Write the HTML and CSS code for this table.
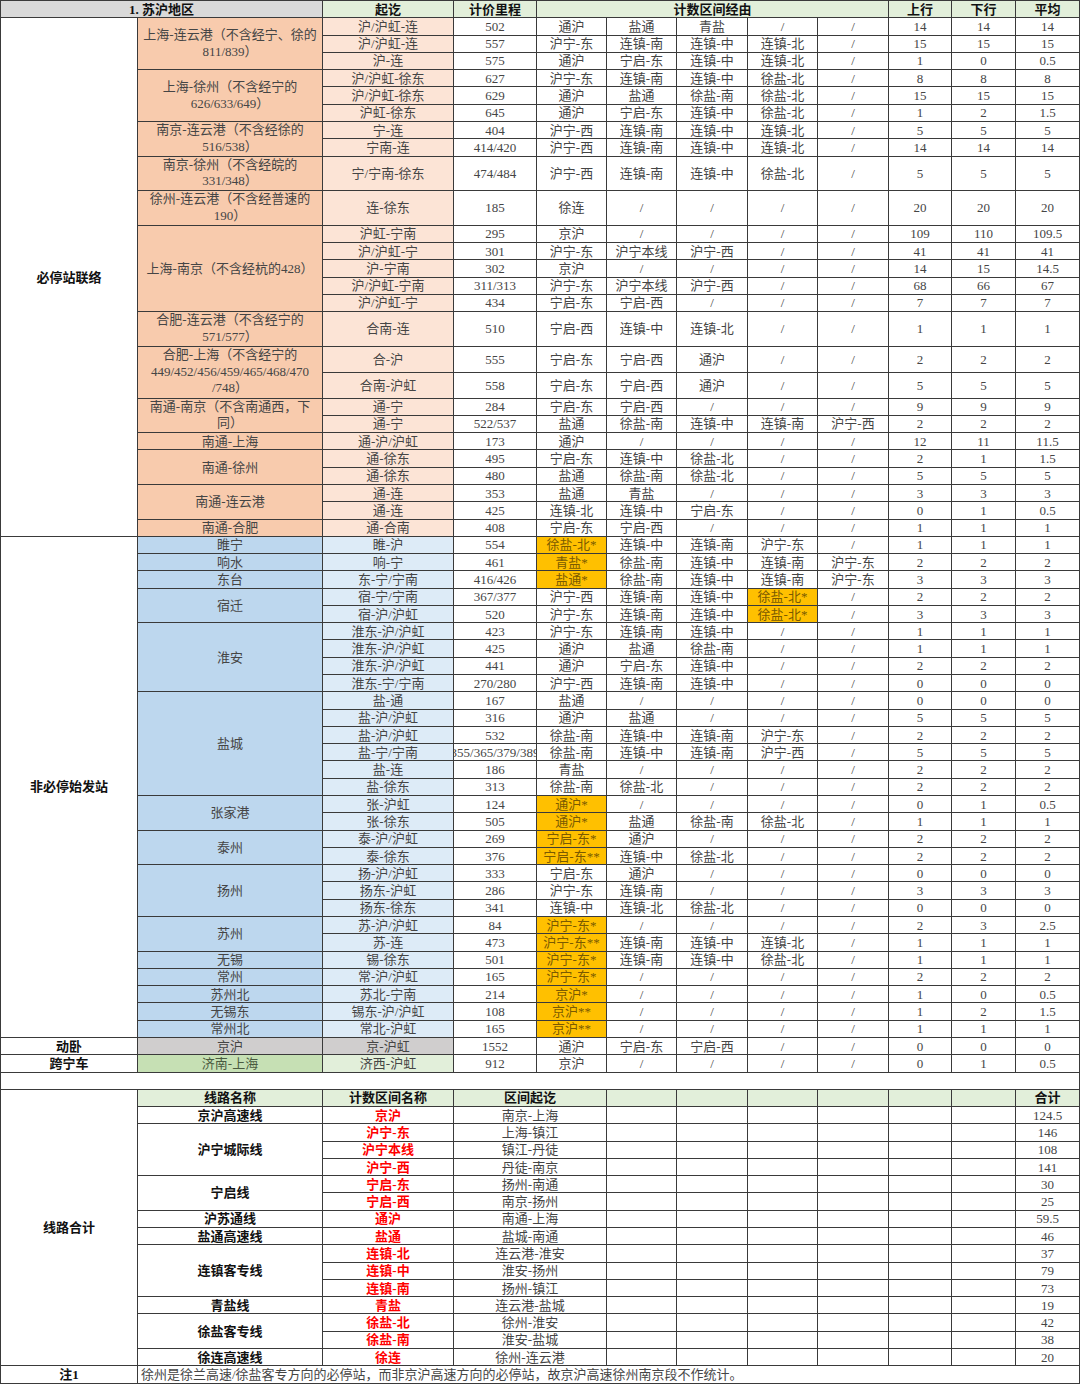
FILE: index.html
```html
<!DOCTYPE html>
<html lang="zh-CN">
<head>
<meta charset="utf-8">
<title>苏沪地区 计数区间统计</title>
<link rel="stylesheet" href="styles.css">
</head>
<body>
<div class="sheet">
<div class="hgray b cs2">1. 苏沪地区</div><div class="hg b">起讫</div><div class="hg b">计价里程</div><div class="hg b cs5">计数区间经由</div><div class="hg b">上行</div><div class="hg b">下行</div><div class="hg b">平均</div>

<div class="b lab rs26">必停站联络</div><div class="sal wrap rs3">上海-连云港（不含经宁、徐的<br>811/839）</div><div class="lsal">沪/沪虹-连</div><div>502</div><div>通沪</div><div>盐通</div><div>青盐</div><div>/</div><div>/</div><div>14</div><div>14</div><div>14</div>
<div class="lsal">沪/沪虹-连</div><div>557</div><div>沪宁-东</div><div>连镇-南</div><div>连镇-中</div><div>连镇-北</div><div>/</div><div>15</div><div>15</div><div>15</div>
<div class="lsal">沪-连</div><div>575</div><div>通沪</div><div>宁启-东</div><div>连镇-中</div><div>连镇-北</div><div>/</div><div>1</div><div>0</div><div>0.5</div>
<div class="sal wrap rs3">上海-徐州（不含经宁的<br>626/633/649）</div><div class="lsal">沪/沪虹-徐东</div><div>627</div><div>沪宁-东</div><div>连镇-南</div><div>连镇-中</div><div>徐盐-北</div><div>/</div><div>8</div><div>8</div><div>8</div>
<div class="lsal">沪/沪虹-徐东</div><div>629</div><div>通沪</div><div>盐通</div><div>徐盐-南</div><div>徐盐-北</div><div>/</div><div>15</div><div>15</div><div>15</div>
<div class="lsal">沪虹-徐东</div><div>645</div><div>通沪</div><div>宁启-东</div><div>连镇-中</div><div>徐盐-北</div><div>/</div><div>1</div><div>2</div><div>1.5</div>
<div class="sal wrap rs2">南京-连云港（不含经徐的<br>516/538）</div><div class="lsal">宁-连</div><div>404</div><div>沪宁-西</div><div>连镇-南</div><div>连镇-中</div><div>连镇-北</div><div>/</div><div>5</div><div>5</div><div>5</div>
<div class="lsal">宁南-连</div><div>414/420</div><div>沪宁-西</div><div>连镇-南</div><div>连镇-中</div><div>连镇-北</div><div>/</div><div>14</div><div>14</div><div>14</div>
<div class="sal wrap">南京-徐州（不含经皖的<br>331/348）</div><div class="lsal">宁/宁南-徐东</div><div>474/484</div><div>沪宁-西</div><div>连镇-南</div><div>连镇-中</div><div>徐盐-北</div><div>/</div><div>5</div><div>5</div><div>5</div>
<div class="sal wrap">徐州-连云港（不含经普速的<br>190）</div><div class="lsal">连-徐东</div><div>185</div><div>徐连</div><div>/</div><div>/</div><div>/</div><div>/</div><div>20</div><div>20</div><div>20</div>
<div class="sal rs5">上海-南京（不含经杭的428）</div><div class="lsal">沪虹-宁南</div><div>295</div><div>京沪</div><div>/</div><div>/</div><div>/</div><div>/</div><div>109</div><div>110</div><div>109.5</div>
<div class="lsal">沪/沪虹-宁</div><div>301</div><div>沪宁-东</div><div>沪宁本线</div><div>沪宁-西</div><div>/</div><div>/</div><div>41</div><div>41</div><div>41</div>
<div class="lsal">沪-宁南</div><div>302</div><div>京沪</div><div>/</div><div>/</div><div>/</div><div>/</div><div>14</div><div>15</div><div>14.5</div>
<div class="lsal">沪/沪虹-宁南</div><div>311/313</div><div>沪宁-东</div><div>沪宁本线</div><div>沪宁-西</div><div>/</div><div>/</div><div>68</div><div>66</div><div>67</div>
<div class="lsal">沪/沪虹-宁</div><div>434</div><div>宁启-东</div><div>宁启-西</div><div>/</div><div>/</div><div>/</div><div>7</div><div>7</div><div>7</div>
<div class="sal wrap">合肥-连云港（不含经宁的<br>571/577）</div><div class="lsal">合南-连</div><div>510</div><div>宁启-西</div><div>连镇-中</div><div>连镇-北</div><div>/</div><div>/</div><div>1</div><div>1</div><div>1</div>
<div class="sal wrap rs2">合肥-上海（不含经宁的<br>449/452/456/459/465/468/470<br>/748）</div><div class="lsal">合-沪</div><div>555</div><div>宁启-东</div><div>宁启-西</div><div>通沪</div><div>/</div><div>/</div><div>2</div><div>2</div><div>2</div>
<div class="lsal">合南-沪虹</div><div>558</div><div>宁启-东</div><div>宁启-西</div><div>通沪</div><div>/</div><div>/</div><div>5</div><div>5</div><div>5</div>
<div class="sal wrap rs2">南通-南京（不含南通西，下<br>同）</div><div class="lsal">通-宁</div><div>284</div><div>宁启-东</div><div>宁启-西</div><div>/</div><div>/</div><div>/</div><div>9</div><div>9</div><div>9</div>
<div class="lsal">通-宁</div><div>522/537</div><div>盐通</div><div>徐盐-南</div><div>连镇-中</div><div>连镇-南</div><div>沪宁-西</div><div>2</div><div>2</div><div>2</div>
<div class="sal">南通-上海</div><div class="lsal">通-沪/沪虹</div><div>173</div><div>通沪</div><div>/</div><div>/</div><div>/</div><div>/</div><div>12</div><div>11</div><div>11.5</div>
<div class="sal rs2">南通-徐州</div><div class="lsal">通-徐东</div><div>495</div><div>宁启-东</div><div>连镇-中</div><div>徐盐-北</div><div>/</div><div>/</div><div>2</div><div>1</div><div>1.5</div>
<div class="lsal">通-徐东</div><div>480</div><div>盐通</div><div>徐盐-南</div><div>徐盐-北</div><div>/</div><div>/</div><div>5</div><div>5</div><div>5</div>
<div class="sal rs2">南通-连云港</div><div class="lsal">通-连</div><div>353</div><div>盐通</div><div>青盐</div><div>/</div><div>/</div><div>/</div><div>3</div><div>3</div><div>3</div>
<div class="lsal">通-连</div><div>425</div><div>连镇-北</div><div>连镇-中</div><div>宁启-东</div><div>/</div><div>/</div><div>0</div><div>1</div><div>0.5</div>
<div class="sal">南通-合肥</div><div class="lsal">通-合南</div><div>408</div><div>宁启-东</div><div>宁启-西</div><div>/</div><div>/</div><div>/</div><div>1</div><div>1</div><div>1</div>

<div class="b lab rs29">非必停始发站</div><div class="blu">睢宁</div><div class="lblu">睢-沪</div><div>554</div><div class="hl">徐盐-北*</div><div>连镇-中</div><div>连镇-南</div><div>沪宁-东</div><div>/</div><div>1</div><div>1</div><div>1</div>
<div class="blu">响水</div><div class="lblu">响-宁</div><div>461</div><div class="hl">青盐*</div><div>徐盐-南</div><div>连镇-中</div><div>连镇-南</div><div>沪宁-东</div><div>2</div><div>2</div><div>2</div>
<div class="blu">东台</div><div class="lblu">东-宁/宁南</div><div>416/426</div><div class="hl">盐通*</div><div>徐盐-南</div><div>连镇-中</div><div>连镇-南</div><div>沪宁-东</div><div>3</div><div>3</div><div>3</div>
<div class="blu rs2">宿迁</div><div class="lblu">宿-宁/宁南</div><div>367/377</div><div>沪宁-西</div><div>连镇-南</div><div>连镇-中</div><div class="hl">徐盐-北*</div><div>/</div><div>2</div><div>2</div><div>2</div>
<div class="lblu">宿-沪/沪虹</div><div>520</div><div>沪宁-东</div><div>连镇-南</div><div>连镇-中</div><div class="hl">徐盐-北*</div><div>/</div><div>3</div><div>3</div><div>3</div>
<div class="blu rs4">淮安</div><div class="lblu">淮东-沪/沪虹</div><div>423</div><div>沪宁-东</div><div>连镇-南</div><div>连镇-中</div><div>/</div><div>/</div><div>1</div><div>1</div><div>1</div>
<div class="lblu">淮东-沪/沪虹</div><div>425</div><div>通沪</div><div>盐通</div><div>徐盐-南</div><div>/</div><div>/</div><div>1</div><div>1</div><div>1</div>
<div class="lblu">淮东-沪/沪虹</div><div>441</div><div>通沪</div><div>宁启-东</div><div>连镇-中</div><div>/</div><div>/</div><div>2</div><div>2</div><div>2</div>
<div class="lblu">淮东-宁/宁南</div><div>270/280</div><div>沪宁-西</div><div>连镇-南</div><div>连镇-中</div><div>/</div><div>/</div><div>0</div><div>0</div><div>0</div>
<div class="blu rs6">盐城</div><div class="lblu">盐-通</div><div>167</div><div>盐通</div><div>/</div><div>/</div><div>/</div><div>/</div><div>0</div><div>0</div><div>0</div>
<div class="lblu">盐-沪/沪虹</div><div>316</div><div>通沪</div><div>盐通</div><div>/</div><div>/</div><div>/</div><div>5</div><div>5</div><div>5</div>
<div class="lblu">盐-沪/沪虹</div><div>532</div><div>徐盐-南</div><div>连镇-中</div><div>连镇-南</div><div>沪宁-东</div><div>/</div><div>2</div><div>2</div><div>2</div>
<div class="lblu">盐-宁/宁南</div><div>355/365/379/389</div><div>徐盐-南</div><div>连镇-中</div><div>连镇-南</div><div>沪宁-西</div><div>/</div><div>5</div><div>5</div><div>5</div>
<div class="lblu">盐-连</div><div>186</div><div>青盐</div><div>/</div><div>/</div><div>/</div><div>/</div><div>2</div><div>2</div><div>2</div>
<div class="lblu">盐-徐东</div><div>313</div><div>徐盐-南</div><div>徐盐-北</div><div>/</div><div>/</div><div>/</div><div>2</div><div>2</div><div>2</div>
<div class="blu rs2">张家港</div><div class="lblu">张-沪虹</div><div>124</div><div class="hl">通沪*</div><div>/</div><div>/</div><div>/</div><div>/</div><div>0</div><div>1</div><div>0.5</div>
<div class="lblu">张-徐东</div><div>505</div><div class="hl">通沪*</div><div>盐通</div><div>徐盐-南</div><div>徐盐-北</div><div>/</div><div>1</div><div>1</div><div>1</div>
<div class="blu rs2">泰州</div><div class="lblu">泰-沪/沪虹</div><div>269</div><div class="hl">宁启-东*</div><div>通沪</div><div>/</div><div>/</div><div>/</div><div>2</div><div>2</div><div>2</div>
<div class="lblu">泰-徐东</div><div>376</div><div class="hl">宁启-东**</div><div>连镇-中</div><div>徐盐-北</div><div>/</div><div>/</div><div>2</div><div>2</div><div>2</div>
<div class="blu rs3">扬州</div><div class="lblu">扬-沪/沪虹</div><div>333</div><div>宁启-东</div><div>通沪</div><div>/</div><div>/</div><div>/</div><div>0</div><div>0</div><div>0</div>
<div class="lblu">扬东-沪虹</div><div>286</div><div>沪宁-东</div><div>连镇-南</div><div>/</div><div>/</div><div>/</div><div>3</div><div>3</div><div>3</div>
<div class="lblu">扬东-徐东</div><div>341</div><div>连镇-中</div><div>连镇-北</div><div>徐盐-北</div><div>/</div><div>/</div><div>0</div><div>0</div><div>0</div>
<div class="blu rs2">苏州</div><div class="lblu">苏-沪/沪虹</div><div>84</div><div class="hl">沪宁-东*</div><div>/</div><div>/</div><div>/</div><div>/</div><div>2</div><div>3</div><div>2.5</div>
<div class="lblu">苏-连</div><div>473</div><div class="hl">沪宁-东**</div><div>连镇-南</div><div>连镇-中</div><div>连镇-北</div><div>/</div><div>1</div><div>1</div><div>1</div>
<div class="blu">无锡</div><div class="lblu">锡-徐东</div><div>501</div><div class="hl">沪宁-东*</div><div>连镇-南</div><div>连镇-中</div><div>徐盐-北</div><div>/</div><div>1</div><div>1</div><div>1</div>
<div class="blu">常州</div><div class="lblu">常-沪/沪虹</div><div>165</div><div class="hl">沪宁-东*</div><div>/</div><div>/</div><div>/</div><div>/</div><div>2</div><div>2</div><div>2</div>
<div class="blu">苏州北</div><div class="lblu">苏北-宁南</div><div>214</div><div class="hl">京沪*</div><div>/</div><div>/</div><div>/</div><div>/</div><div>1</div><div>0</div><div>0.5</div>
<div class="blu">无锡东</div><div class="lblu">锡东-沪/沪虹</div><div>108</div><div class="hl">京沪**</div><div>/</div><div>/</div><div>/</div><div>/</div><div>1</div><div>2</div><div>1.5</div>
<div class="blu">常州北</div><div class="lblu">常北-沪虹</div><div>165</div><div class="hl">京沪**</div><div>/</div><div>/</div><div>/</div><div>/</div><div>1</div><div>1</div><div>1</div>

<div class="b lab">动卧</div><div class="gry">京沪</div><div class="gry">京-沪虹</div><div>1552</div><div>通沪</div><div>宁启-东</div><div>宁启-西</div><div>/</div><div>/</div><div>0</div><div>0</div><div>0</div>
<div class="b lab">跨宁车</div><div class="grn">济南-上海</div><div class="lgrn">济西-沪虹</div><div>912</div><div>京沪</div><div>/</div><div>/</div><div>/</div><div>/</div><div>0</div><div>1</div><div>0.5</div>

<div class="cs12"></div>

<div class="b lab rs16">线路合计</div><div class="hg b">线路名称</div><div class="hg b">计数区间名称</div><div class="hg b cs2">区间起讫</div><div class="hg"></div><div class="hg"></div><div class="hg"></div><div class="hg"></div><div class="hg"></div><div class="hg"></div><div class="hg b">合计</div>
<div class="b lab">京沪高速线</div><div class="red">京沪</div><div class="cs2">南京-上海</div><div></div><div></div><div></div><div></div><div></div><div></div><div>124.5</div>
<div class="b lab rs3">沪宁城际线</div><div class="red">沪宁-东</div><div class="cs2">上海-镇江</div><div></div><div></div><div></div><div></div><div></div><div></div><div>146</div>
<div class="red">沪宁本线</div><div class="cs2">镇江-丹徒</div><div></div><div></div><div></div><div></div><div></div><div></div><div>108</div>
<div class="red">沪宁-西</div><div class="cs2">丹徒-南京</div><div></div><div></div><div></div><div></div><div></div><div></div><div>141</div>
<div class="b lab rs2">宁启线</div><div class="red">宁启-东</div><div class="cs2">扬州-南通</div><div></div><div></div><div></div><div></div><div></div><div></div><div>30</div>
<div class="red">宁启-西</div><div class="cs2">南京-扬州</div><div></div><div></div><div></div><div></div><div></div><div></div><div>25</div>
<div class="b lab">沪苏通线</div><div class="red">通沪</div><div class="cs2">南通-上海</div><div></div><div></div><div></div><div></div><div></div><div></div><div>59.5</div>
<div class="b lab">盐通高速线</div><div class="red">盐通</div><div class="cs2">盐城-南通</div><div></div><div></div><div></div><div></div><div></div><div></div><div>46</div>
<div class="b lab rs3">连镇客专线</div><div class="red">连镇-北</div><div class="cs2">连云港-淮安</div><div></div><div></div><div></div><div></div><div></div><div></div><div>37</div>
<div class="red">连镇-中</div><div class="cs2">淮安-扬州</div><div></div><div></div><div></div><div></div><div></div><div></div><div>79</div>
<div class="red">连镇-南</div><div class="cs2">扬州-镇江</div><div></div><div></div><div></div><div></div><div></div><div></div><div>73</div>
<div class="b lab">青盐线</div><div class="red">青盐</div><div class="cs2">连云港-盐城</div><div></div><div></div><div></div><div></div><div></div><div></div><div>19</div>
<div class="b lab rs2">徐盐客专线</div><div class="red">徐盐-北</div><div class="cs2">徐州-淮安</div><div></div><div></div><div></div><div></div><div></div><div></div><div>42</div>
<div class="red">徐盐-南</div><div class="cs2">淮安-盐城</div><div></div><div></div><div></div><div></div><div></div><div></div><div>38</div>
<div class="b lab">徐连高速线</div><div class="red">徐连</div><div class="cs2">徐州-连云港</div><div></div><div></div><div></div><div></div><div></div><div></div><div>20</div>

<div class="b lab">注1</div><div class="cs11 note">徐州是徐兰高速/徐盐客专方向的必停站，而非京沪高速方向的必停站，故京沪高速徐州南京段不作统计。</div>
</div>
</body>
</html>
```

FILE: styles.css
```css
html, body {
  margin: 0;
  padding: 0;
  background: #ffffff;
}

body {
  width: 1080px;
}

.sheet {
  display: grid;
  box-sizing: border-box;
  width: 1080px;
  grid-template-columns: 136px 184px 130px 82px 69px 69px 70px 69px 70px 62px 63px 63px;
  grid-template-rows: 16.29px repeat(8, 16.29px) 33.58px 33.58px repeat(5, 16.29px) 33.58px 24.94px 24.94px;
  grid-auto-rows: 16.29px;
  gap: 1px;
  padding: 1px;
  background: #3a3a3a;
  font-family: "Liberation Serif", "Noto Sans CJK SC", serif;
  font-size: 13px;
  color: #454545;
}

.sheet > div {
  background: #ffffff;
  display: flex;
  align-items: center;
  justify-content: center;
  text-align: center;
  line-height: 17px;
  white-space: nowrap;
  overflow: hidden;
}

.sheet > .wrap {
  line-height: 16.6px;
}

.b {
  font-weight: 700;
}

.lab {
  color: #111111;
}

.sheet > .hgray {
  background: #d9d9d9;
  color: #111111;
}

.sheet > .hg {
  background: #e2efda;
  color: #111111;
}

.sheet > .sal {
  background: #f8cbad;
}

.sheet > .lsal {
  background: #fce4d6;
}

.sheet > .blu {
  background: #bdd7ee;
}

.sheet > .lblu {
  background: #ddebf7;
}

.sheet > .hl {
  background: #ffc000;
  color: #7a5a00;
}

.sheet > .gry {
  background: #d0cece;
}

.sheet > .grn {
  background: #c6e0b4;
  color: #4a5a40;
}

.sheet > .lgrn {
  background: #e2efda;
}

.red {
  color: #ff0000;
  font-weight: 700;
}

.sheet > .note {
  justify-content: flex-start;
  text-align: left;
  padding-left: 3px;
}

.cs2 { grid-column: span 2; }
.cs5 { grid-column: span 5; }
.cs11 { grid-column: span 11; }
.cs12 { grid-column: span 12; }

.rs2 { grid-row: span 2; }
.rs3 { grid-row: span 3; }
.rs4 { grid-row: span 4; }
.rs5 { grid-row: span 5; }
.rs6 { grid-row: span 6; }
.rs16 { grid-row: span 16; }
.rs26 { grid-row: span 26; }
.rs29 { grid-row: span 29; }
```
